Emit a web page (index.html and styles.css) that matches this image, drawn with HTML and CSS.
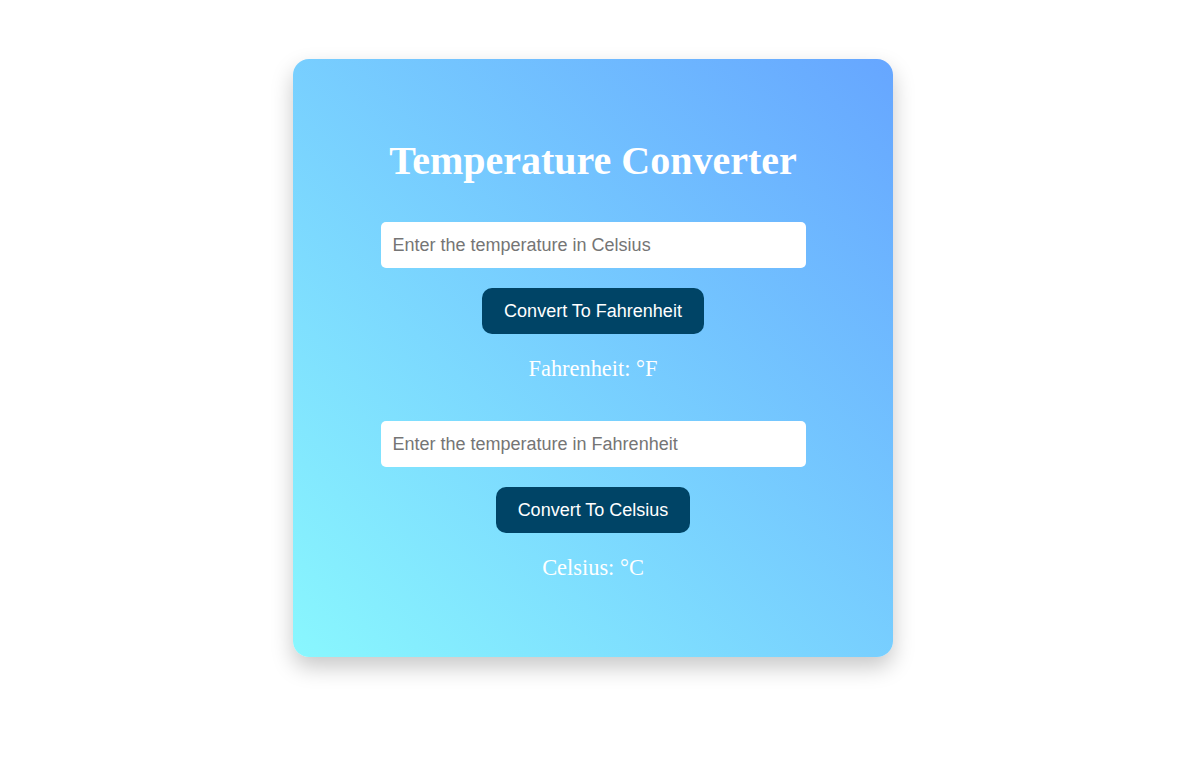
FILE: index.html
```html
<!DOCTYPE html>
<html lang="en">
<head>
<meta charset="UTF-8">
<title>Temperature Converter</title>
<link rel="stylesheet" href="styles.css">
</head>
<body>
<div class="page">
  <div class="card">
    <h1 class="title">Temperature Converter</h1>
    <div class="group">
      <input class="field" type="text" placeholder="Enter the temperature in Celsius">
      <button class="btn">Convert To Fahrenheit</button>
      <p class="result">Fahrenheit: °F</p>
    </div>
    <div class="group second">
      <input class="field" type="text" placeholder="Enter the temperature in Fahrenheit">
      <button class="btn">Convert To Celsius</button>
      <p class="result">Celsius: °C</p>
    </div>
  </div>
</div>
</body>
</html>
```

FILE: styles.css
```css
html, body {
  margin: 0;
  padding: 0;
  background: #ffffff;
}

.page {
  display: flex;
  justify-content: center;
  padding: 59px 5px 100px 0;
}

.card {
  width: 600px;
  height: 598px;
  box-sizing: border-box;
  padding-top: 79px;
  border-radius: 16px;
  background: linear-gradient(45deg, #89f7fe 0%, #66a6ff 100%);
  box-shadow: 0 10px 22px rgba(0, 0, 0, 0.22);
  display: flex;
  flex-direction: column;
  align-items: center;
}

.title {
  margin: 0;
  font-family: "Liberation Serif", "Times New Roman", serif;
  font-size: 40px;
  line-height: 46px;
  font-weight: bold;
  color: #ffffff;
}

.group {
  display: flex;
  flex-direction: column;
  align-items: center;
  margin-top: 38px;
}

.group.second {
  margin-top: 39px;
}

.field {
  width: 425px;
  height: 46px;
  box-sizing: border-box;
  border: none;
  border-radius: 5px;
  padding: 0 12px;
  font-family: "Liberation Sans", Arial, sans-serif;
  font-size: 18px;
  background: #ffffff;
  color: #333;
  outline: none;
}

.field::placeholder {
  color: #757575;
}

.btn {
  margin-top: 20px;
  height: 46px;
  padding: 0 22px;
  border: none;
  border-radius: 10px;
  background: #004466;
  color: #ffffff;
  font-family: "Liberation Sans", Arial, sans-serif;
  font-size: 18px;
  cursor: pointer;
}

.result {
  margin: 22px 0 0;
  font-family: "Liberation Serif", "Times New Roman", serif;
  font-size: 22.4px;
  line-height: 26px;
  color: #ffffff;
}
```
